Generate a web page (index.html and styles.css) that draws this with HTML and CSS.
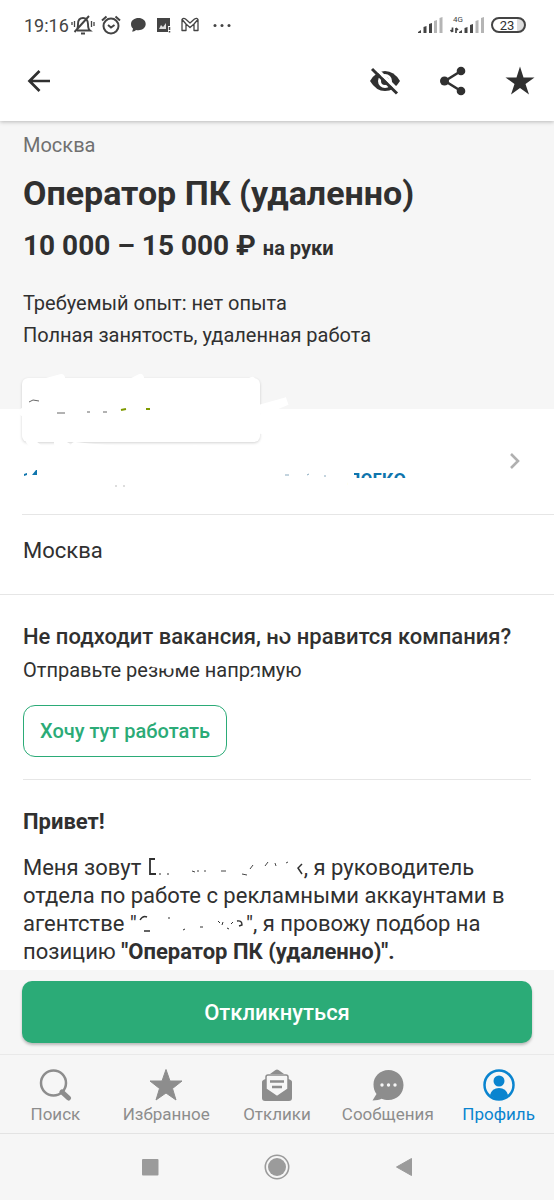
FILE: index.html
```html
<!DOCTYPE html>
<html lang="ru">
<head>
<meta charset="utf-8">
<meta name="viewport" content="width=device-width, initial-scale=1">
<title>Оператор ПК (удаленно)</title>
<link rel="stylesheet" href="styles.css">
</head>
<body>
<div class="screen">
  <div class="status">
    <span class="clock">19:16</span>
    <div class="notices">
      <svg width="24" height="20" viewBox="0 0 24 20" fill="none" stroke="#444" stroke-width="1.900"><path d="M6 15.500h13c-2-1.500-2-4-2-6.500C17 5.500 15 3 12 3 8.500 3 7 5.500 7 9c0 3 0 5-2 6.500M3.500 17 18 1"/><path d="M10 18.500h4" stroke-width="2"/><path d="M1 7v3M3.500 6v6M20.500 6v6M23 7v4" stroke-width="1.300"/></svg>
      <svg width="20" height="20" viewBox="0 0 20 20" fill="none" stroke="#444" stroke-width="2"><circle cx="10" cy="11" r="7.500"/><path d="m7 10 3 2.500 3.500-2.500"/><path d="M1 5.500 5.500 1.500M19 5.500l-4.500-4"/></svg>
      <svg width="15" height="16" viewBox="0 0 15 16" fill="#444"><path d="M7.500 1C3.500 1 0 3.500 0 7c0 2 .8 3.500 2 4.500 0 1-.4 2-1 3 1.500 0 3-.6 4-1.600.8.2 1.600.3 2.500.3 4 0 7.200-2.600 7.200-6.200S11.500 1 7.500 1z"/></svg>
      <svg width="15" height="16" viewBox="0 0 15 16"><path d="M1 1h13v8h-2v6H1z" fill="#444"/><path d="m3 12 2-4 2 2 3-4v6z" fill="#ddd"/><path d="M13.500 10v3M13.500 14v1.500" stroke="#444" stroke-width="1.500"/></svg>
      <svg width="18" height="16" viewBox="0 0 18 16" fill="none" stroke="#444" stroke-width="1.300" stroke-linejoin="round"><path d="M1 13.500V2.500Q2.500.6 4.500 2L9 6l4.500-4Q16 .6 17 2.500v11h-4V7L9 10.500 5 7v6.500zM5 7 1.500 3M13 7l3.500-4"/></svg>
      <svg class="more" width="18" height="16" viewBox="0 0 18 16" fill="#444"><circle cx="2" cy="8.500" r="1.500"/><circle cx="9" cy="8.500" r="1.500"/><circle cx="16" cy="8.500" r="1.500"/></svg>
    </div>
    <div class="radio">
      <svg width="25" height="18" viewBox="0 0 25 18" fill="#444"><path d="M0 17v-1l3-2v3zM5.500 17v-6l3-1v7zM11 17V8l3-1v10z"/><path d="M16 17V5l3-1v13zM21.500 17V2l3-1v16z" fill="#b5b5b5"/></svg>
      <svg width="34" height="20" viewBox="0 0 34 20" fill="#444"><text x="3" y="7" font-size="8">4G</text><path d="M9 18v-1l3-2v3zM14.500 18v-5l3-1v6zM20 18v-8l3-1v9z"/><path d="M2.500 12.500V17M.5 15l2 2M6 18v-5M6 13l2 2" fill="none" stroke="#444" stroke-width="1.700"/><path d="M25.500 18V6l3-1v13zM31 18V3l3-1v16z" fill="#b5b5b5"/></svg>
      <span class="battery">23</span>
    </div>
  </div>

  <header class="toolbar">
    <button class="icon-btn" aria-label="Назад"><svg width="24" height="24" viewBox="0 0 24 24" fill="none" stroke="#303030" stroke-width="2.700"><path d="M23 12H3M12.500 2 2.500 12l10 10"/></svg></button>
    <div class="actions">
      <button class="icon-btn" aria-label="Скрыть"><svg width="32" height="28" viewBox="0 0 32 28"><path d="M1 14Q7 4 16 4t15 10Q25 24 16 24T1 14z" fill="#303030"/><circle cx="16" cy="14" r="7" fill="#fff"/><circle cx="16" cy="14" r="4" fill="#303030"/><path d="m6 .5 24 24" stroke="#fff" stroke-width="3.500"/><path d="m3 2 25 24.500" stroke="#303030" stroke-width="3"/></svg></button>
      <button class="icon-btn" aria-label="Поделиться"><svg width="28" height="30" viewBox="0 0 28 30" fill="#303030"><path d="M22 5 6 15l16 10" fill="none" stroke="#303030" stroke-width="2.600"/><circle cx="22" cy="5" r="4.300"/><circle cx="5.500" cy="15" r="4.500"/><circle cx="22" cy="25" r="4.300"/></svg></button>
      <button class="icon-btn" aria-label="В избранном"><svg width="30" height="30" viewBox="0 0 30 30" fill="#303030"><path d="m15 .5 3.500 11H29.500L20.500 18 24 28.500 15 22l-9 6.500L9.500 18 .5 11.500h11z"/></svg></button>
    </div>
  </header>

  <main class="content">
    <section class="summary">
      <p class="city">Москва</p>
      <h1 class="title">Оператор ПК (удаленно)</h1>
      <p class="salary">10 000 – 15 000 ₽ <span class="net">на руки</span></p>
      <p class="terms">Требуемый опыт: нет опыта</p>
      <p class="terms">Полная занятость, удаленная работа</p>
    </section>

    <section class="company">
      <div class="logo">
        <svg class="smear" width="300" height="84" viewBox="0 0 300 84" aria-hidden="true">
          <g fill="none" stroke="#fff" stroke-width="8" stroke-linecap="round"><path d="m28 17 18-5 15-4M126 15l14-7M242 17l10-6M23 42l12-5-6 10M262 38l25-7-24 10M30 71l8 7M58 73l8 3M75 76q95 10 120 3M262 48v12"/></g>
          <path d="m29 32 4-2 6 1M57 43h8M87 42h3M103 42h4" stroke="#666" fill="none"/>
          <path d="m121 40 5-1M146 39h4" stroke="#7f9a00" stroke-width="2"/>
        </svg>
      </div>
      <a class="company-link" href="#" aria-label="Компания">
        <svg class="remnant" width="326" height="24" viewBox="0 0 326 24" aria-hidden="true"><path d="M2 8V6l3-1v2zM10 7l4-5h1v5z" fill="#0f75ad"/><path d="M263 7h4M285 7l2-1M302 8h2" stroke="#88a9be" fill="none"/><path d="M93 18h2M101 18h2" stroke="#bbb"/></svg>
        <span class="cut-word">легко</span>
        <svg class="chevron" width="12" height="18" viewBox="0 0 12 18" fill="none" stroke="#b0b0b0" stroke-width="2.600"><path d="m2 2 7 7-7 7"/></svg>
      </a>
    </section>

    <section class="address">Москва</section>

    <section class="direct">
      <h2 class="direct-title">Не подходит вакансия, <span class="wiped">но<svg class="wipe" viewBox="0 0 26 28" preserveAspectRatio="none" aria-hidden="true"><path d="m3 7 9 2 7 4" fill="none" stroke="#fff" stroke-width="5" stroke-linecap="round"/></svg></span> нравится компания?</h2>
      <p class="direct-text">Отправьте ре<span class="wiped">зюм<svg class="wipe" viewBox="0 0 38 28" preserveAspectRatio="none" aria-hidden="true"><path d="M5 8q13 4 28 0" fill="none" stroke="#fff" stroke-width="5" stroke-linecap="round"/></svg></span>е напр<span class="wiped">я<svg class="wipe" viewBox="0 0 12 28" preserveAspectRatio="none" aria-hidden="true"><path d="m3 17 4-1" fill="none" stroke="#fff" stroke-width="5" stroke-linecap="round"/></svg></span>мую</p>
      <button class="outline-btn">Хочу тут работать</button>
    </section>

    <article class="description">
      <p><strong>Привет!</strong></p>
      <p>Меня зовут <svg class="gap-name" viewBox="0 0 157 20" aria-hidden="true"><g fill="none" stroke="#303030"><path d="M8 2H3v15h6" stroke-width="1.800"/><path d="M12 17h2M20 17h2"/><path d="m45 14 3 1M50 14h2M57 14h2M74 14h5M95 17l5 1M103 12l3-4M118 9l3-4M128 6l1 3M139 6l2-1" stroke-width=".9"/><path d="m155 7-4 4 4 6" stroke-width="1.500"/></g></svg>, я руководитель отдела по работе с рекламными аккаунтами в агентстве "<svg class="gap-firm" viewBox="0 0 109 20" aria-hidden="true"><g fill="none" stroke="#303030" stroke-width="1.400"><path d="M3 7q3-5 7-3M7 18h6"/><path d="M31 5h2M46 17l2-1M63 14h3M81 8l2 2M86 9l-1 3M90 15l2 1M96 9l-2 2" stroke-width="1"/><path d="M100 8q5-1 5 4l-3 1"/></g></svg>", я провожу подбор на позицию <strong>"Оператор ПК (удаленно)".</strong></p>
    </article>
  </main>

  <div class="cta"><button class="primary-btn">Откликнуться</button></div>

  <nav class="tabs">
    <a class="tab" href="#"><svg width="34" height="34" viewBox="0 0 34 34" fill="none" stroke="#8d8d8d"><circle cx="15.500" cy="15" r="12.500" stroke-width="2.500"/><path d="m24 24 6.500 6" stroke-width="5" stroke-linecap="round"/></svg>Поиск</a>
    <a class="tab" href="#"><svg width="34" height="34" viewBox="0 0 34 34" fill="#8d8d8d" stroke="#8d8d8d" stroke-linejoin="round"><path d="m17 1.500 4 11.500h12l-9.500 7.500L27 32l-10-7-10 7 3.500-11.500L1 13h12z"/></svg>Избранное</a>
    <a class="tab" href="#"><svg width="34" height="34" viewBox="0 0 34 34"><path d="m10 6 5.500-4q1.500-.8 3 0L24 6z" fill="#8d8d8d"/><path d="M2 14q0-2 4-3h22q4 1 4 3v16q0 3-3 3H5q-3 0-3-3z" fill="#8d8d8d"/><path d="M6 9q0-2 2-2h18q2 0 2 2v12l-11 7.500L6 21z" fill="#f6f6f6" stroke="#8d8d8d" stroke-width="1.500"/><path d="M10 13.500h14M12 19h10" stroke="#8d8d8d" stroke-width="2.500"/></svg>Отклики</a>
    <a class="tab" href="#"><svg width="34" height="34" viewBox="0 0 34 34"><path d="M17.500 2C9 2 2.500 8.500 2.500 16.500c0 4 1 7 3 9.500L1.500 32.500c4 0 7-.5 9-1.700 2 .8 4.500 1.200 7 1.200 8.500 0 15-6.500 15-15S26 2 17.500 2z" fill="#8d8d8d"/><g fill="#f6f6f6"><circle cx="11" cy="17" r="1.700"/><circle cx="17.500" cy="17" r="1.700"/><circle cx="24" cy="17" r="1.700"/></g></svg>Сообщения</a>
    <a class="tab active" href="#"><svg width="34" height="34" viewBox="0 0 34 34"><circle cx="17" cy="17" r="14.500" fill="none" stroke="#0a84cf" stroke-width="2.500"/><circle cx="17" cy="13" r="5.500" fill="#0a84cf"/><path d="M8 27q2-7 9-7t9 7q-4 4-9 4t-9-4z" fill="#0a84cf"/></svg>Профиль</a>
  </nav>

  <div class="system-nav">
    <button class="sys-btn" aria-label="Недавние"><svg width="18" height="18" viewBox="0 0 18 18"><rect x="1" y="1" width="16.500" height="16.500" rx="1" fill="#9b9b9b"/></svg></button>
    <button class="sys-btn" aria-label="Домой"><svg width="26" height="26" viewBox="0 0 26 26"><circle cx="13" cy="13" r="11.700" fill="none" stroke="#9b9b9b" stroke-width="1.600"/><circle cx="13" cy="13" r="9" fill="#9b9b9b"/></svg></button>
    <button class="sys-btn" aria-label="Назад"><svg width="18" height="20" viewBox="0 0 18 20"><path d="M16.500 1.500v17L1.500 10z" fill="#9b9b9b" stroke="#9b9b9b" stroke-linejoin="round"/></svg></button>
  </div>
</div>
</body>
</html>
```
FILE: styles.css
```css
* { box-sizing: border-box; }
body, h1, h2, p { margin: 0; }
body { background: #fff; color: #303030; font-family: Roboto, "Noto Sans", sans-serif; }
button { padding: 0; border: 0; background: none; font-family: inherit; color: inherit; }
a { color: inherit; text-decoration: none; }
svg { flex: none; }

.screen { min-height: 100vh; display: flex; flex-direction: column; }

.status { display: flex; align-items: center; height: 50px; padding: 0 28px 0 24px; }
.clock { font-size: 18px; color: #444; }
.notices { display: flex; align-items: center; gap: 10px; margin-left: 2px; }
.notices svg:first-child { margin-right: -4px; }
.notices .more { margin-left: 4px; }
.radio { display: flex; align-items: center; gap: 7px; margin-left: auto; }
.battery { width: 35px; height: 16px; border: 2px solid #444; border-radius: 8px; background: linear-gradient(90deg, #fff 78%, #ddd 78%); font-size: 13px; line-height: 13px; text-align: center; padding-right: 3px; }

.toolbar { position: relative; display: flex; align-items: center; justify-content: space-between; height: 71px; padding: 0 19px 10px 27px; background: #fff; box-shadow: 0 1px 4px rgba(0, 0, 0, .25); clip-path: inset(0 0 -8px 0); }
.actions { display: flex; align-items: center; gap: 38px; }
.icon-btn { display: flex; }

.content { flex: 1; }
.summary { padding: 12px 23px 58px; background: #f6f6f6; }
.city { font-size: 20px; line-height: 24px; color: #707070; }
.title { margin-top: 16px; font-size: 34px; line-height: 40px; font-weight: 700; }
.salary { margin: 15px 0 22px; font-size: 28px; line-height: 36px; font-weight: 700; }
.net { font-size: 20px; }
.terms { font-size: 20px; line-height: 31px; }
.terms + .terms { padding-top: 1px; }

.company { padding-left: 22px; }
.logo { position: relative; width: 238px; height: 64px; margin-top: -31px; border-radius: 6px; background: #fff; box-shadow: 0 1px 3px rgba(0, 0, 0, .18); }
.smear { position: absolute; left: -22px; top: -8px; }
.company-link { display: flex; align-items: flex-start; height: 73px; padding: 10px 33px 0 0; border-bottom: 1px solid #e6e6e6; }
.remnant { margin-top: 16px; }
.cut-word { position: relative; margin-top: 14px; font-size: 22px; line-height: 24px; font-weight: 500; color: #0f75ad; }
.cut-word::before, .cut-word::after { content: ""; position: absolute; left: 0; background: #fff; }
.cut-word::before { top: 0; width: 6px; height: 24px; }
.cut-word::after { top: 12px; right: 0; height: 12px; }
.chevron { margin-left: auto; }

.address { padding: 22px 23px 29px; border-bottom: 1px solid #e6e6e6; font-size: 22px; line-height: 28px; }

.direct { margin: 0 23px; padding: 28px 0 22px; border-bottom: 1px solid #e6e6e6; }
.direct-title { font-size: 22px; line-height: 28px; font-weight: 500; white-space: nowrap; }
.direct-text { margin: 5px 0 21px; font-size: 20px; line-height: 28px; }
.wiped { position: relative; }
.wipe { position: absolute; left: 0; top: 0; width: 100%; height: 100%; }
.outline-btn { display: block; height: 52px; padding: 0 16px; border: 1px solid #2bab77; border-radius: 12px; color: #2bab77; font-size: 20px; font-weight: 500; }

.description { padding: 28px 23px 4px; font-size: 22px; line-height: 28px; }
.description p + p { margin-top: 18px; }
.gap-name { width: 157px; height: 20px; vertical-align: -2px; }
.gap-firm { width: 109px; height: 20px; vertical-align: -2px; }

.cta { padding: 11px 22px; background: #f6f6f6; }
.primary-btn { display: block; width: 100%; height: 62px; border-radius: 10px; background: #2bab77; color: #fff; font-size: 22px; font-weight: 500; box-shadow: 0 2px 3px rgba(0, 0, 0, .25); }

.tabs { display: grid; grid-template-columns: repeat(5, 1fr); height: 79px; padding-top: 13px; border-top: 1px solid #e9e9e9; background: #f6f6f6; }
.tab { display: flex; flex-direction: column; align-items: center; font-size: 17px; line-height: 24px; color: #8d8d8d; }
.tab.active { color: #0a84cf; }

.system-nav { display: flex; justify-content: center; align-items: center; gap: 105px; height: 67px; border-top: 1px solid #e3e3e3; background: #f6f6f6; }
.sys-btn { display: flex; }
```
